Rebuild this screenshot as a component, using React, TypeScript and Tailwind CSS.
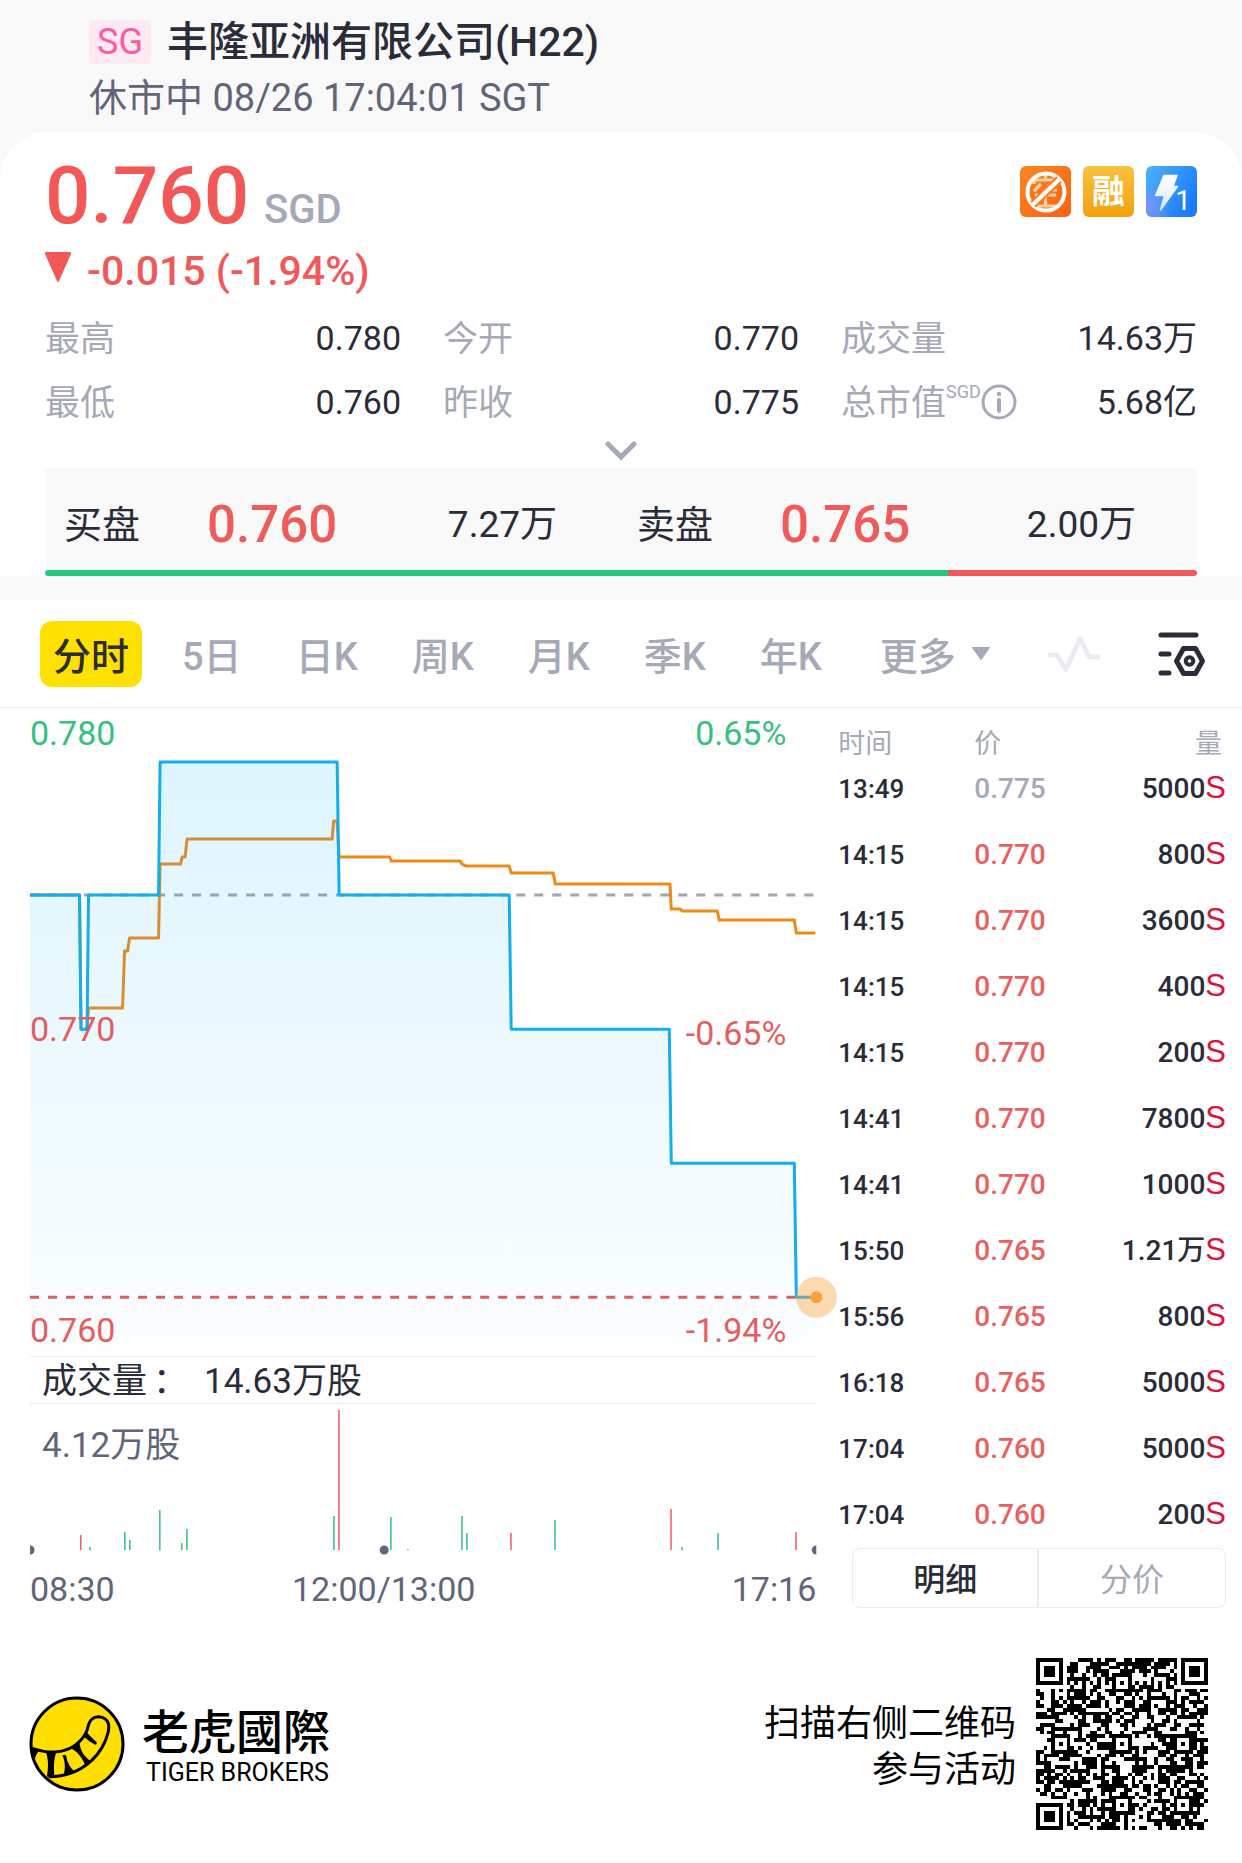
import React from 'react';

const ROBOTO = "font-[Roboto,'Noto_Sans_CJK_SC',sans-serif]";

const STATS = [
  { label: '最高', value: '0.780' },
  { label: '今开', value: '0.770' },
  { label: '成交量', value: '14.63万' },
  { label: '最低', value: '0.760' },
  { label: '昨收', value: '0.775' },
  { label: '总市值', value: '5.68亿', unit: 'SGD' },
];

const QUOTES = [
  { label: '买盘', price: '0.760', volume: '7.27万' },
  { label: '卖盘', price: '0.765', volume: '2.00万' },
];

const PERIODS = ['5日', '日K', '周K', '月K', '季K', '年K'];

const TRADES = [
  { time: '13:49', price: '0.775', volume: '5000', flat: true },
  { time: '14:15', price: '0.770', volume: '800' },
  { time: '14:15', price: '0.770', volume: '3600' },
  { time: '14:15', price: '0.770', volume: '400' },
  { time: '14:15', price: '0.770', volume: '200' },
  { time: '14:41', price: '0.770', volume: '7800' },
  { time: '14:41', price: '0.770', volume: '1000' },
  { time: '15:50', price: '0.765', volume: '1.21万' },
  { time: '15:56', price: '0.765', volume: '800' },
  { time: '16:18', price: '0.765', volume: '5000' },
  { time: '17:04', price: '0.760', volume: '5000' },
  { time: '17:04', price: '0.760', volume: '200' },
];

/* Volume bars: x position, height, direction */
const BARS: [number, number, 'up' | 'down'][] = [
  [80, 15, 'down'], [89, 3, 'up'], [124, 18, 'up'], [129, 10, 'up'], [159, 40, 'up'],
  [181, 7, 'up'], [186, 21, 'up'], [333, 34, 'up'], [338, 140, 'down'], [390, 33, 'up'],
  [407, 1, 'up'], [461, 34, 'up'], [466, 17, 'up'], [510, 17, 'down'], [554, 30, 'up'],
  [670, 41, 'down'], [681, 3, 'up'], [717, 17, 'up'], [795, 18, 'down'],
];

const PRICE_LINE =
  'M30 187H79.5L81 321H87L88.500 187H158.500L160 54H337L339 187H509L511 321H669L671 455H794L796 589H815';
const PRICE_AREA =
  'M30 187H79.5L81 321H87L88.500 187H158.500L160 54H337L339 187H509L511 321H669L671 455H794L796 589H815V642H30Z';
const AVERAGE_LINE =
  'M30 187H79.5L81 321H87L88.500 300H122.500L124.500 243H127.500L129.500 230H158.500L160 156H180.500L182 149H185L187 131H332L333.500 113H337L339 149H389.600L391 153H460L462 156L466 158H509L511 165H553L555 176H669.700L671 201H680L682 203H717L719 212H794L796 225H815';

function TriangleDown({ className }: { className: string }) {
  return (
    <svg viewBox="0 0 26 30" preserveAspectRatio="none" className={className} aria-hidden="true">
      <path d="M1 0H25Q26.500 0 26 2L14 29Q13 31 12 29L0 2Q-0.500 0 1 0Z" fill="currentColor" />
    </svg>
  );
}

function NoShortBadge() {
  return (
    <svg viewBox="0 0 51 51" className="size-[51px]" role="img" aria-label="不可卖空">
      <defs>
        <linearGradient id="orange" x1="0" y1="0" x2="1" y2="1">
          <stop offset="0" stopColor="#f48a22" />
          <stop offset="1" stopColor="#fd5f12" />
        </linearGradient>
      </defs>
      <rect width="51" height="51" rx="6" fill="url(#orange)" />
      <g stroke="#ffd0a8" strokeWidth="3.200" fill="none">
        <path d="M25.500 9v4M14 18v-4h23v4M21 18l-7 7M29 18v4q0 2 3 2h5M15 29h21M25.500 29v10M12 40h27" />
      </g>
      <circle cx="26" cy="26" r="18.500" fill="none" stroke="#fff" strokeWidth="4" />
      <path d="M13 38.500L39 13.500" stroke="#fd7a1c" strokeWidth="8" />
      <path d="M13 38.500L39 13.500" stroke="#fff" strokeWidth="4" />
    </svg>
  );
}

function MarginBadge() {
  return (
    <span className="flex size-[51px] items-center justify-center rounded-md bg-linear-to-b from-[#f9c23c] to-[#f3a004] text-[33px] leading-none font-bold text-white">
      融
    </span>
  );
}

function LevelOneBadge() {
  return (
    <span className="relative block size-[51px]">
      <svg viewBox="0 0 51 51" className="size-[51px]" aria-hidden="true">
        <defs>
          <linearGradient id="blue" x1="0" y1="0" x2="1" y2="0.600">
            <stop offset="0" stopColor="#4db2fb" />
            <stop offset="1" stopColor="#1b7cfb" />
          </linearGradient>
          <radialGradient id="violet" cx="0.050" cy="0.800" r="0.450">
            <stop offset="0" stopColor="#7b93fb" />
            <stop offset="1" stopColor="#7b93fb" stopOpacity="0" />
          </radialGradient>
          <linearGradient id="bolt" x1="0" y1="0" x2="0" y2="1">
            <stop offset="0" stopColor="#fff" />
            <stop offset="1" stopColor="#d6e9ff" />
          </linearGradient>
        </defs>
        <rect width="51" height="51" rx="6" fill="url(#blue)" />
        <rect width="51" height="51" rx="6" fill="url(#violet)" />
        <path d="M18 9.500H31L27 20.500H31.500L14.500 44L18.500 29.500H9.500Z" fill="url(#bolt)" stroke="url(#bolt)" strokeWidth="1.500" strokeLinejoin="round" />
      </svg>
      <span className="absolute right-1.5 bottom-0.5 text-[28px] leading-none text-white">1</span>
    </span>
  );
}

function PriceChart() {
  return (
    <div className="relative">
      <svg viewBox="0 0 838 649" className="block h-auto w-full" role="img" aria-label="分时走势">
        <defs>
          <linearGradient id="area" x1="0" y1="0" x2="0" y2="1">
            <stop offset="0" stopColor="#12b4fa" stopOpacity="0.140" />
            <stop offset="1" stopColor="#12b4fa" stopOpacity="0.015" />
          </linearGradient>
        </defs>
        <path d="M30 187H815" stroke="#a2a5b3" strokeWidth="3" strokeDasharray="9 9" />
        <path d={AVERAGE_LINE} fill="none" stroke="#ef8a17" strokeWidth="3" strokeLinejoin="round" />
        <path d={PRICE_AREA} fill="url(#area)" />
        <path d="M30 589H796" stroke="#e25b60" strokeWidth="3" strokeDasharray="9 9" />
        <path d={PRICE_LINE} fill="none" stroke="#12aeef" strokeWidth="3" strokeLinejoin="round" />
        <circle cx="816" cy="589" r="20.500" fill="#f7a440" fillOpacity="0.420" />
        <circle cx="816" cy="589" r="6" fill="#f7a03c" />
        <path d="M30 648.500H816" stroke="#e8e8ea" strokeWidth="1" />
      </svg>
      <div className="absolute inset-x-[30px] top-0 flex justify-between pr-[22px] text-[34px] leading-[50px] text-[#35c07f]">
        <span>0.780</span>
        <span>0.65%</span>
      </div>
      <div className="absolute inset-x-[30px] top-[296px] flex justify-between pr-[22px] text-[34px] leading-[50px] text-[#e65d60]">
        <span>0.770</span>
        <span className="pt-1">-0.65%</span>
      </div>
      <div className="absolute inset-x-[30px] bottom-0.5 flex justify-between pr-[22px] text-[34px] leading-[50px] text-[#e65d60]">
        <span>0.760</span>
        <span>-1.94%</span>
      </div>
    </div>
  );
}

function VolumeChart() {
  return (
    <div className="relative">
      <svg viewBox="0 0 838 152" className="block h-auto w-full" role="img" aria-label="成交量">
        <defs>
          <clipPath id="plot">
            <rect x="30" y="0" width="786" height="152" />
          </clipPath>
        </defs>
        {BARS.map(([x, h, dir]) => (
          <rect key={x} x={x} y={146 - h} width="1.500" height={h} fill={dir === 'up' ? '#35c07f' : '#ee5a5c'} />
        ))}
        <g fill="#62657a" clipPath="url(#plot)">
          <circle cx="30" cy="146" r="4.500" />
          <circle cx="384" cy="146" r="4.500" />
          <circle cx="816" cy="146" r="4.500" />
        </g>
      </svg>
      <span className="absolute top-[18px] left-[42px] text-[35px] leading-[48px] text-[#62657a]">4.12万股</span>
    </div>
  );
}

const QR_SIZE = 45;

/* Version 7 layout: finders, timing, alignment marks, then a pseudo-random payload. */
function buildQr(): string {
  const grid: (boolean | null)[][] = Array.from({ length: QR_SIZE }, () => Array(QR_SIZE).fill(null));
  const square = (cy: number, cx: number, radius: number, rings: boolean[]) => {
    for (let dy = -radius; dy <= radius; dy++)
      for (let dx = -radius; dx <= radius; dx++) {
        const y = cy + dy;
        const x = cx + dx;
        if (y < 0 || x < 0 || y >= QR_SIZE || x >= QR_SIZE) continue;
        grid[y][x] = rings[Math.max(Math.abs(dx), Math.abs(dy))];
      }
  };
  for (let i = 0; i < QR_SIZE; i++) {
    grid[6][i] = i % 2 === 0;
    grid[i][6] = i % 2 === 0;
  }
  const finder = [true, true, false, true, false];
  square(3, 3, 4, finder);
  square(3, QR_SIZE - 4, 4, finder);
  square(QR_SIZE - 4, 3, 4, finder);
  const align = [true, false, true];
  [[6, 22], [22, 6], [22, 22], [22, 38], [38, 22], [38, 38]].forEach(([y, x]) => square(y, x, 2, align));
  let seed = 20826;
  let d = '';
  for (let y = 0; y < QR_SIZE; y++)
    for (let x = 0; x < QR_SIZE; x++) {
      seed = (seed * 1103515245 + 12345) % 2147483648;
      const on = grid[y][x] ?? (seed >> 16) % 100 < 52;
      if (on) d += `M${x} ${y}h1v1h-1z`;
    }
  return d;
}

const QR_PATH = buildQr();

function TigerLogo() {
  return (
    <svg viewBox="89 73 290 290" className="size-24" role="img" aria-label="Tiger Brokers">
      <circle cx="234" cy="218" r="139" fill="#ffdf00" stroke="#000" strokeWidth="9" />
      <path
        d="M99 231C125 240 145 243 168 242C215 239 248 213 263 180C269 165 268 152 279 143C290 133 309 134 320 143C331 152 332 167 328 183C320 215 302 246 277 269C243 300 200 317 148 317"
        fill="none"
        stroke="#000"
        strokeWidth="9"
      />
      <path d="M94 228L120 238C112 248 108 256 105 272Q97 255 94 228Z" />
      <path d="M140 242L172 242C164 262 163 288 166 317L143 316C148 290 148 265 140 242Z" />
      <path d="M190 253Q197 248 201 253C204 270 210 286 224 299L194 311C199 290 199 272 190 253Z" />
      <path d="M218 232L242 216C244 237 253 254 275 270L259 282C250 260 238 243 218 232Z" />
      <path d="M254 196L264 183C273 193 282 202 293 212Q296 219 289 220C277 214 266 206 254 196Z" />
    </svg>
  );
}

export default function App() {
  return (
    <div className={`${ROBOTO} min-h-screen bg-[#f9f9f9] text-[#2b2c3a]`}>
      <header className="px-[89px] pt-4 pb-2">
        <h1 className="flex items-center gap-4 text-[41px] leading-[52px] font-medium">
          <span className="rounded bg-[#fce9f2] px-2 text-[36px] leading-[44px] font-normal text-[#ff5a9f]">SG</span>
          丰隆亚洲有限公司(H22)
        </h1>
        <p className="mt-1 text-[38px] leading-[52px] text-[#62657a]">休市中 08/26 17:04:01 SGT</p>
      </header>

      <section className="rounded-t-[48px] bg-white px-[45px] pt-6">
        <div className="flex items-start justify-between">
          <div>
            <p className="flex items-baseline gap-[15px] leading-[80px] font-medium text-[#f25857]">
              <span className="text-[80px]">0.760</span>
              <span className="text-[40px] text-[#a6a9b7]">SGD</span>
            </p>
            <p className="flex items-center gap-4 text-[41px] leading-[42px] font-medium text-[#f25857]">
              <TriangleDown className="mb-2 h-[30px] w-[26px]" />
              -0.015 (-1.94%)
            </p>
          </div>
          <div className="flex gap-3 pt-2.5">
            <NoShortBadge />
            <MarginBadge />
            <LevelOneBadge />
          </div>
        </div>

        <dl className="mt-3.5 grid grid-cols-3 gap-x-[42px] leading-[64px]">
          {STATS.map((s) => (
            <div key={s.label} className="flex h-16 items-center justify-between">
              <dt className="flex items-center pt-1 text-[35px] text-[#a6a9b7]">
                {s.label}
                {s.unit && (
                  <>
                    <span className="mb-6 text-[18px] leading-none">{s.unit}</span>
                    <svg viewBox="0 0 36 36" className="mb-1 size-9" role="img" aria-label="说明">
                      <circle cx="18" cy="18" r="16" fill="none" stroke="currentColor" strokeWidth="3" />
                      <circle cx="18" cy="10" r="2.200" fill="currentColor" />
                      <path d="M18 16V27" stroke="currentColor" strokeWidth="4" strokeLinecap="round" />
                    </svg>
                  </>
                )}
              </dt>
              <dd className="text-[34px]">{s.value}</dd>
            </div>
          ))}
        </dl>

        <button type="button" aria-label="展开" className="mx-auto flex h-[34px] w-16 items-center justify-center">
          <svg viewBox="0 0 32 20" className="h-5 w-8" aria-hidden="true">
            <path d="M3 3L16 16L29 3" fill="none" stroke="#a6a9b7" strokeWidth="5" strokeLinecap="round" />
          </svg>
        </button>

        <div className="grid grid-cols-[573fr_579fr] bg-[#f9f9f9]">
          {QUOTES.map((q) => (
            <div key={q.label} className="flex h-[102px] items-center pt-3 pr-[61px] pl-[19px] text-[37px]">
              <span className="w-[143px] text-[38px]">{q.label}</span>
              <span className="text-[51px] font-medium text-[#ee5b5b]">{q.price}</span>
              <span className="ml-auto">{q.volume}</span>
            </div>
          ))}
        </div>
        <div className="flex h-1.5 overflow-hidden rounded-sm">
          <div className="w-[78.4%] bg-[#28c77f]" />
          <div className="flex-1 bg-[#f25857]" />
        </div>
      </section>

      <main className="mt-6 bg-white">
        <nav className="flex h-[108px] items-center border-b border-[#ececee] pr-9 pl-10 text-[38px] font-medium text-[#a6a9b7]">
          <button type="button" className="h-[66px] rounded-xl bg-[#ffe100] px-[13px] pt-2 text-[#2b2c3a]">分时</button>
          <div className="ml-10 flex gap-[54px] pt-2">
            {PERIODS.map((p) => (
              <button type="button" key={p}>{p}</button>
            ))}
            <button type="button" className="ml-1 flex items-center gap-4">
              更多
              <TriangleDown className="mb-2 h-[13px] w-[18px]" />
            </button>
          </div>
          <button type="button" aria-label="指标" className="mr-[58px] ml-auto">
            <svg viewBox="0 0 52 38" className="h-[38px] w-[52px]" aria-hidden="true">
              <path d="M2 20H9L18 34.500L32 3.500L41 22H50" fill="none" stroke="#ececf0" strokeWidth="5" strokeLinecap="round" strokeLinejoin="round" />
            </svg>
          </button>
          <button type="button" aria-label="设置">
            <svg viewBox="0 0 48 44" className="h-11 w-12" fill="none" stroke="#2b2c3a" strokeWidth="5" strokeLinecap="round" strokeLinejoin="round" aria-hidden="true">
              <path d="M3 3H38M3 22H11M3 41H11" />
              <path d="M25.500 16.500H37.500L44.500 29L37.500 41.500H25.500L18.500 29Z" />
              <circle cx="31.500" cy="29" r="3.800" strokeWidth="4" />
            </svg>
          </button>
        </nav>

        <div className="flex">
          <section className="w-[67.5%]">
            <PriceChart />
            <p className="mr-[22px] ml-[30px] flex h-[47px] items-center gap-4 border-b border-[#e8e8ea] pt-1 pl-3 text-[35px] leading-[46px]">
              <span>成交量<span className="ml-1.5">：</span></span>
              <span>14.63万股</span>
            </p>
            <VolumeChart />
            <div className="flex pt-1 pr-[22px] pl-[30px] text-[34px] leading-[58px] text-[#62657a]">
              <span className="w-[262px]">08:30</span>
              <span>12:00/13:00</span>
              <span className="ml-auto">17:16</span>
            </div>
          </section>

          <section className="flex-1 pt-[15px] pr-4">
            <table className="w-full">
              <thead className="text-[27px] leading-[42px] text-[#a6a9b7]">
                <tr>
                  <th className="w-[136px] text-left font-normal">时间</th>
                  <th className="text-left font-normal">价</th>
                  <th className="pr-1 text-right font-normal">量</th>
                </tr>
              </thead>
              <tbody className="text-[28px] leading-[66px] font-medium">
                {TRADES.map((t, i) => (
                  <tr key={i} className="h-[66px] first:h-[57px] first:align-top first:leading-[48px]">
                    <td className="text-[26px]">{t.time}</td>
                    <td className={t.flat ? 'text-[#a6a9b7]' : 'text-[#ea5f60]'}>{t.price}</td>
                    <td className="text-right">
                      <span>{t.volume}</span>
                      <span className="font-['Liberation_Sans'] text-[31px] leading-none font-normal text-[#e0103c]">S</span>
                    </td>
                  </tr>
                ))}
              </tbody>
            </table>
            <div className="ml-[14px] grid h-[60px] grid-cols-2 divide-x-2 divide-[#ececef] rounded-lg border border-[#ececef] text-[32px]">
              <button type="button" className="pt-1 font-medium">明细</button>
              <button type="button" className="pt-1 text-[#a6a9b7]">分价</button>
            </div>
          </section>
        </div>

        <footer className="mt-7 flex items-center pt-3 pr-[34px] pb-8 pl-[29px] text-black">
          <TigerLogo />
          <div className="ml-[17px] pt-1">
            <p className="font-['Noto_Sans_CJK_TC'] text-[47px] leading-[54px] font-medium" lang="zh-TW">老虎國際</p>
            <p className="pl-1 text-[25px] leading-[34px]">TIGER BROKERS</p>
          </div>
          <p className="ml-auto pt-1.5 text-right text-[36px] leading-[46px]">
            扫描右侧二维码
            <br />
            参与活动
          </p>
          <svg viewBox="0 0 45 45" className="ml-5 size-[172px]" shapeRendering="crispEdges" role="img" aria-label="活动二维码">
            <path d={QR_PATH} />
          </svg>
        </footer>
      </main>
    </div>
  );
}
